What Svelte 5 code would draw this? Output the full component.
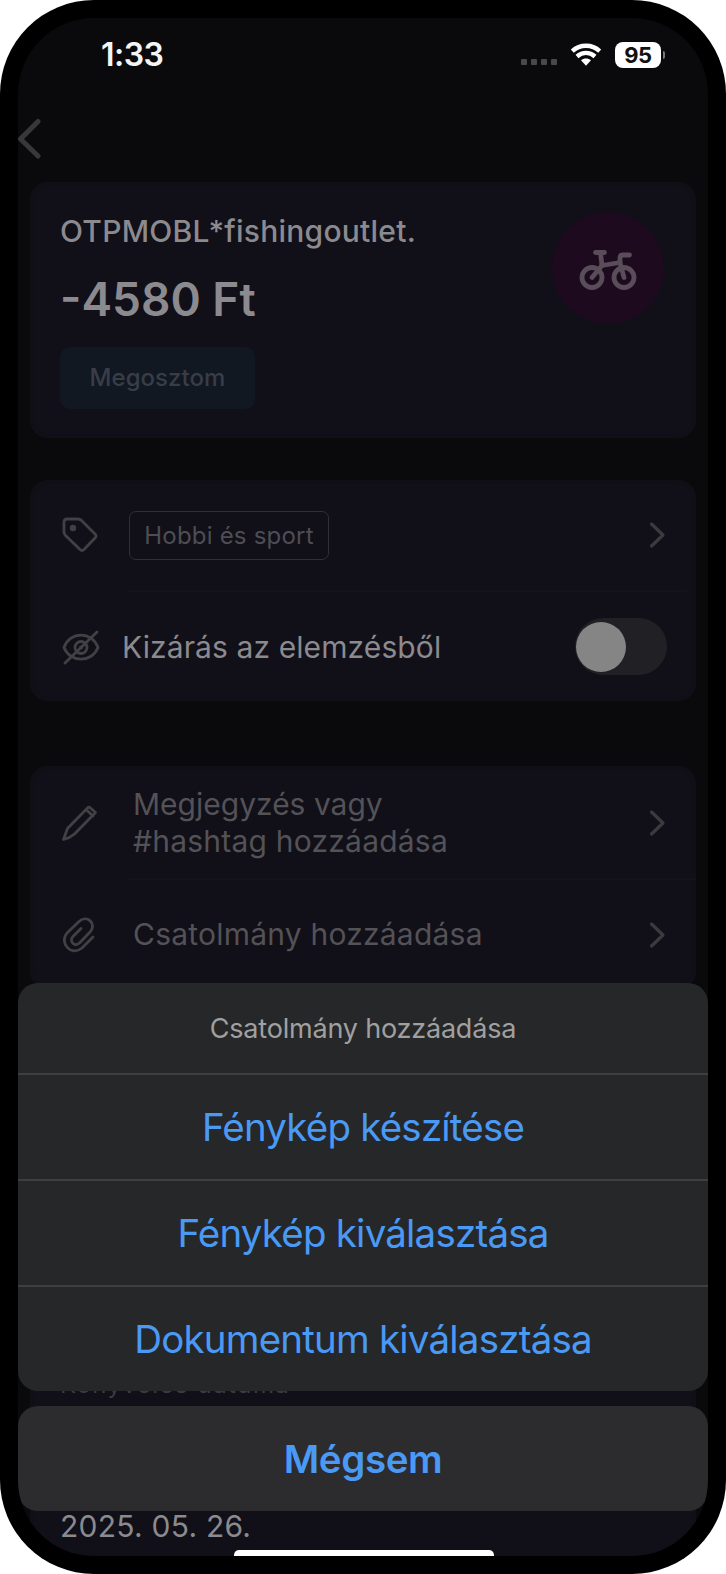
<script>
  let time = "1:33";
  let battery = 95;
  let excluded = false;

  const transaction = {
    merchant: "OTPMOBL*fishingoutlet.",
    amount: "-4580 Ft",
    category: "Hobbi és sport",
    bookedAt: "2025. 05. 26."
  };

  const actions = [
    "Fénykép készítése",
    "Fénykép kiválasztása",
    "Dokumentum kiválasztása"
  ];
</script>

{#snippet chevron()}
  <svg class="chevron" width="18" height="28" viewBox="0 0 18 28">
    <path d="M3.500 3L15 14L3.500 25" />
  </svg>
{/snippet}

<div class="phone">
  <div class="screen">
    <header class="status">
      <span class="time">{time}</span>
      <div class="indicators">
        <div class="dots"><i></i><i></i><i></i><i></i></div>
        <svg class="wifi" width="32" height="24" viewBox="0 0 32 24">
          <path d="M2.300 8.200C10 1 22 1 29.700 8.200" />
          <path d="M7 13.500C12.400 8.700 19.600 8.700 25 13.500" />
          <path class="fill" d="M11 17.300C13.800 14.800 18.200 14.800 21 17.300L16 22.800Z" />
        </svg>
        <div class="battery">{battery}</div>
        <div class="battery-tip"></div>
      </div>
    </header>

    <nav class="nav">
      <svg width="24" height="42" viewBox="0 0 24 42">
        <path d="M20 3.500L2.500 21L20 38" />
      </svg>
    </nav>

    <section class="card summary">
      <div class="summary-text">
        <div class="merchant">{transaction.merchant}</div>
        <div class="amount">{transaction.amount}</div>
        <button class="share">Megosztom</button>
      </div>
      <div class="category-icon">
        <svg width="58" height="42" viewBox="0 0 58 42">
          <circle cx="13" cy="28.500" r="10" />
          <circle cx="45" cy="28.500" r="10" />
          <path d="M13 28.500L23 16.500L41 13.500L45 28.500" />
          <path d="M23 16.500L21.500 4M16.500 3.500H25.500" />
          <path d="M41 13.500V9Q41 6 44 6H50.500" />
        </svg>
      </div>
    </section>

    <section class="card settings">
      <div class="row">
        <svg class="icon tag" width="38" height="38" viewBox="0 0 38 38">
          <path d="M3 6Q3 3 6 3H17Q19 3 20.500 4.500L34 18Q36 20 34 22L23 33.500Q21 35.500 19 33.500L4.500 19.500Q3 18 3 16Z" />
          <circle cx="12" cy="12" r="3.200" />
        </svg>
        <span class="chip">{transaction.category}</span>
        {@render chevron()}
      </div>
      <div class="divider"></div>
      <div class="row exclude">
        <svg class="icon eye" width="40" height="38" viewBox="0 0 40 38">
          <path d="M3 19.500C9 3 31 3 37 19.500C31 35 9 35 3 19.500Z" />
          <circle cx="20" cy="19.500" r="6" />
          <circle class="pupil" cx="20" cy="19.500" r="2" />
          <path d="M4 35L36 4" />
        </svg>
        <span class="label">Kizárás az elemzésből</span>
        <button class="switch" class:on={excluded} aria-label="Kizárás" on:click={() => (excluded = !excluded)}>
          <span class="knob"></span>
        </button>
      </div>
    </section>

    <section class="card extras">
      <div class="row note">
        <svg class="icon" width="38" height="38" viewBox="0 0 38 38">
          <path d="M2.500 35.500L6.500 24.500L26.500 4Q28 2.500 29.500 4L34.500 8.500L13.500 30Q9 34 2.500 35.500ZM25 5.500L32 12" />
        </svg>
        <span class="hint"><span class="first-line">Megjegyzés vagy</span><br />#hashtag hozzáadása</span>
        {@render chevron()}
      </div>
      <div class="divider wide"></div>
      <div class="row attachment">
        <svg class="icon" width="38" height="38" viewBox="0 0 38 38">
          <path d="M32 21L21 32C10 41 -2 27 6 17L18 5.500C26 -2 36 8 29.500 15.500L18.500 27C13 31.500 8 25 12 20.500L20 12.500" />
        </svg>
        <span class="hint">Csatolmány hozzáadása</span>
        {@render chevron()}
      </div>
    </section>

    <section class="card booking">
      <div class="booking-label">Könyvelés dátuma</div>
      <div class="booking-date">{transaction.bookedAt}</div>
    </section>

    <div class="sheet">
      <div class="sheet-group">
        <div class="sheet-title">Csatolmány hozzáadása</div>
        {#each actions as action}
          <button class="sheet-action">{action}</button>
        {/each}
      </div>
      <button class="sheet-cancel">Mégsem</button>
    </div>

    <div class="home-indicator"></div>
  </div>
</div>

<style>
  :global(body) {
    background: #fff;
  }

  .phone {
    box-sizing: border-box;
    width: 726px;
    height: 1574px;
    padding: 18px;
    background: #000;
    border-radius: 94px;
    font-family: Inter, "Liberation Sans", sans-serif;
  }

  .screen {
    position: relative;
    height: 1538px;
    overflow: hidden;
    border-radius: 76px;
    background: #0a0a0c;
  }

  button {
    border: none;
    padding: 0;
    font-family: inherit;
  }

  svg {
    display: block;
    flex-shrink: 0;
    fill: none;
    stroke-linecap: round;
    stroke-linejoin: round;
  }

  .status {
    display: flex;
    align-items: center;
    justify-content: space-between;
    height: 73px;
    padding: 0 43px 0 83px;
  }

  .time {
    color: #f4f4f4;
    font-size: 32px;
    font-weight: 600;
    letter-spacing: -0.5px;
  }

  .indicators {
    display: flex;
    align-items: center;
  }

  .dots {
    display: flex;
    gap: 4px;
    margin: 15px 13px 0 0;
  }

  .dots i {
    width: 6px;
    height: 6px;
    border-radius: 1px;
    background: #49494b;
  }

  .wifi {
    margin-right: 13px;
    stroke: #fff;
    stroke-width: 4.4;
    stroke-linecap: butt;
  }

  .wifi .fill {
    fill: #fff;
    stroke: none;
  }

  .battery {
    width: 46px;
    height: 26px;
    border-radius: 8px;
    background: #fff;
    color: #111;
    font-size: 22px;
    font-weight: 700;
    line-height: 26px;
    text-align: center;
    letter-spacing: -0.5px;
  }

  .battery-tip {
    width: 2px;
    height: 8px;
    margin-left: 2px;
    border-radius: 0 2px 2px 0;
    background: #77777a;
  }

  .nav {
    height: 91px;
    padding-top: 27px;
    box-sizing: border-box;
  }

  .nav svg {
    stroke: #38383a;
    stroke-width: 5;
  }

  .card {
    box-sizing: border-box;
    width: 666px;
    margin-left: 12px;
    border-radius: 18px;
    background: #110f18;
    box-shadow: inset 0 0 3px 1px #111115;
  }

  .summary {
    display: flex;
    justify-content: space-between;
    height: 256px;
    padding: 30px 32px 0 30px;
  }

  .merchant {
    height: 39px;
    color: #8b8a8e;
    font-size: 30px;
    font-weight: 500;
    line-height: 39px;
    letter-spacing: 0.24px;
    white-space: nowrap;
  }

  .amount {
    margin-top: 20px;
    color: #8b8a8e;
    font-size: 46px;
    font-weight: 600;
    line-height: 56px;
    white-space: nowrap;
  }

  .share {
    display: block;
    width: 195px;
    height: 62px;
    margin-top: 20px;
    padding-bottom: 1px;
    border-radius: 10px;
    background: #111822;
    color: #393d48;
    font-size: 24px;
    font-weight: 500;
    letter-spacing: 0.05px;
  }

  .category-icon {
    display: flex;
    align-items: center;
    justify-content: center;
    width: 112px;
    height: 112px;
    border-radius: 50%;
    background: #1e0a1e;
  }

  .category-icon svg {
    margin: 3px 0 0 0;
    stroke: #584d59;
    stroke-width: 4.8;
  }

  .settings {
    height: 221px;
    margin-top: 42px;
  }

  .row {
    display: flex;
    align-items: center;
    box-sizing: border-box;
    height: 110px;
    padding: 0 30px;
  }

  .icon {
    margin-left: 1px;
    stroke: #414145;
    stroke-width: 2.8;
  }

  .tag circle,
  .pupil {
    fill: #414145;
    stroke: none;
  }

  .chevron {
    margin-left: auto;
    stroke: #3b3b3f;
    stroke-width: 3.2;
  }

  .chip {
    box-sizing: border-box;
    width: 200px;
    height: 49px;
    margin: 1px 0 0 30px;
    border: 1px solid #303035;
    border-radius: 7px;
    color: #4e4d53;
    font-size: 24px;
    line-height: 47px;
    text-align: center;
    letter-spacing: 0.2px;
    white-space: nowrap;
  }

  .divider {
    width: 560px;
    height: 2px;
    margin-left: 97px;
    background: #141317;
  }

  .divider.wide {
    width: 569px;
  }

  .exclude {
    height: 109px;
  }

  .label {
    margin-left: 21px;
    padding-top: 1px;
    color: #8b8a8e;
    font-size: 30px;
    letter-spacing: 0.1px;
    white-space: nowrap;
  }

  .switch {
    display: flex;
    align-items: center;
    box-sizing: border-box;
    width: 92px;
    height: 57px;
    margin: 0 -1px 0 auto;
    padding: 0 1px;
    border-radius: 29px;
    background: #202025;
  }

  .switch.on {
    justify-content: flex-end;
  }

  .knob {
    width: 50px;
    height: 50px;
    border-radius: 50%;
    background: #858585;
  }

  .extras {
    height: 223px;
    margin-top: 65px;
  }

  .note {
    height: 112px;
    padding-top: 2px;
  }

  .attachment {
    height: 109px;
  }

  .hint {
    margin-left: 34px;
    color: #535257;
    font-size: 30px;
    line-height: 37px;
    letter-spacing: 0.22px;
    white-space: nowrap;
  }

  .first-line {
    letter-spacing: 0;
  }

  .booking {
    height: 400px;
    margin-top: 340px;
    padding: 41px 30px 0;
  }

  .booking-label {
    height: 30px;
    color: #3c3b41;
    font-size: 24px;
    line-height: 30px;
    letter-spacing: 1.4px;
  }

  .booking-date {
    margin-top: 108px;
    color: #8b8a8e;
    font-size: 30px;
    line-height: 37px;
    letter-spacing: 0.25px;
  }

  /* action sheet lies over the dimmed page */
  .sheet {
    position: absolute;
    top: 965px;
    left: 0;
    right: 0;
  }

  .sheet-group {
    overflow: hidden;
    border-radius: 20px;
    background: #262728;
  }

  .sheet-title {
    height: 90px;
    color: #a0a0a1;
    font-size: 27px;
    line-height: 91px;
    text-align: center;
    letter-spacing: -0.2px;
  }

  .sheet-action {
    display: block;
    box-sizing: border-box;
    width: 100%;
    height: 106px;
    border-top: 2px solid #3e3f40;
    background: none;
    color: #4a9af5;
    font-size: 38.5px;
    letter-spacing: -0.8px;
  }

  .sheet-cancel {
    display: block;
    width: 100%;
    height: 105px;
    margin-top: 15px;
    border-radius: 20px;
    background: #2c2c2e;
    color: #4a9af5;
    font-size: 38.5px;
    font-weight: 600;
    letter-spacing: -0.4px;
  }

  .home-indicator {
    position: absolute;
    left: 216px;
    bottom: 0;
    width: 260px;
    height: 6px;
    border-radius: 5px 5px 0 0;
    background: #fff;
  }
</style>
